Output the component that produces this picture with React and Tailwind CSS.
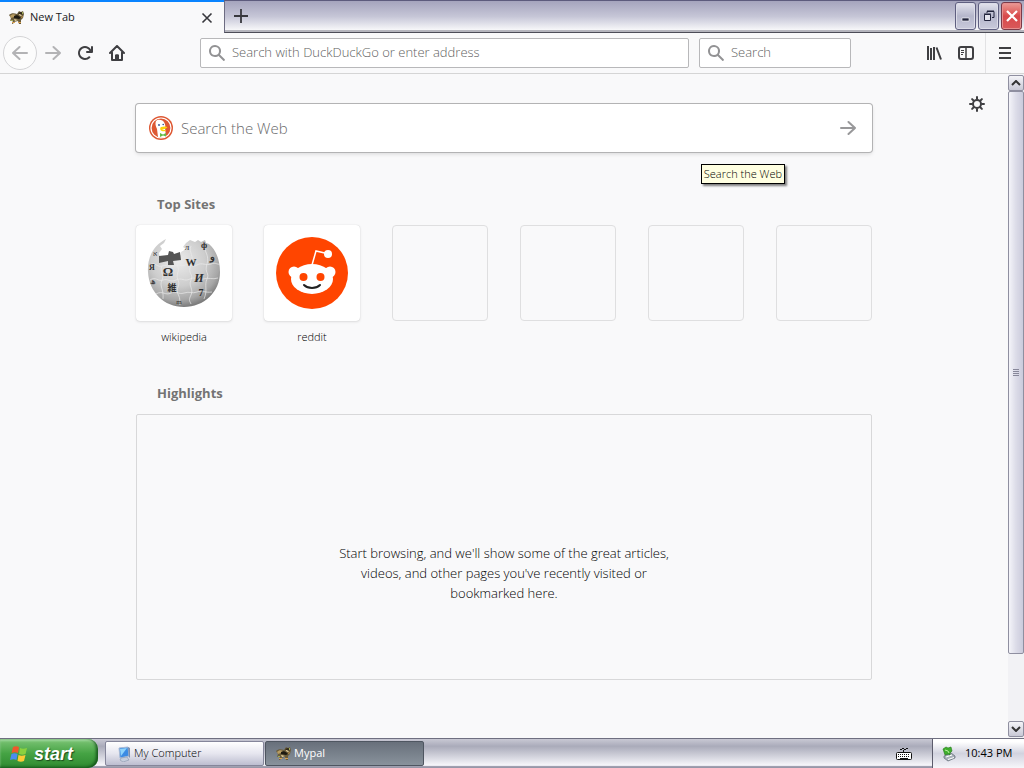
import React from "react";

const shortcuts = [
  { name: "wikipedia", href: "#wikipedia", Logo: WikipediaLogo },
  { name: "reddit", href: "#reddit", Logo: RedditLogo },
  null,
  null,
  null,
  null,
];

/* ---------- icons ---------- */

function Icon({ d, className = "size-4" }) {
  return (
    <svg viewBox="0 0 16 16" className={className} fill="currentColor" aria-hidden="true">
      <path d={d} />
    </svg>
  );
}

const paths = {
  search:
    "M15.7 14.3l-4.8-4.8a6 6 0 1 0-1.4 1.4l4.8 4.8a1 1 0 0 0 1.4-1.4zM6 10a4 4 0 1 1 4-4 4 4 0 0 1-4 4z",
  reload:
    "M15 1a1 1 0 0 0-1 1v2.4A7 7 0 1 0 8 15a7 7 0 0 0 5-2 1 1 0 0 0-1.5-1.5A5 5 0 1 1 12.5 6H10a1 1 0 0 0 0 2h5a1 1 0 0 0 1-1V2a1 1 0 0 0-1-1z",
};

function ArrowIcon({ flip, className = "size-4" }) {
  return (
    <svg viewBox="0 0 16 16" className={className} fill="none" stroke="currentColor" strokeWidth="2" strokeLinecap="round" strokeLinejoin="round" aria-hidden="true">
      <path d={flip ? "M15 8H1M7.5 2L1 8l6.5 6" : "M1 8h14M8.5 2L15 8l-6.5 6"} />
    </svg>
  );
}

function HomeIcon() {
  return (
    <svg viewBox="0 0 16 16" className="size-4" fill="none" stroke="currentColor" strokeWidth="2" strokeLinecap="round" strokeLinejoin="round" aria-hidden="true">
      <path d="M1 8l7-7 7 7M3 7.500V15h10V7.500" />
      <path d="M6.500 15.500V9.500h3v6z" fill="currentColor" stroke="none" />
      <path d="M6.500 15V10h3v5" strokeWidth="1" />
    </svg>
  );
}

function LibraryIcon() {
  return (
    <svg viewBox="0 0 16 16" className="size-4" fill="none" stroke="currentColor" strokeWidth="2" aria-hidden="true">
      <path d="M2 1v14M8 2v13M10.500 2.500L15 14.500" />
      <path d="M5 3v12" />
    </svg>
  );
}

function SidebarIcon() {
  return (
    <svg viewBox="0 0 16 16" className="size-4" fill="none" stroke="currentColor" aria-hidden="true">
      <rect x="1" y="2" width="14" height="12" rx="2" strokeWidth="2" />
      <path d="M8 2v12" strokeWidth="1.500" />
      <path d="M3 5.500h3M3 7.500h3M3 9.500h2" />
    </svg>
  );
}

function GearIcon() {
  return (
    <svg viewBox="0 0 16 16" className="size-4" fill="none" stroke="currentColor" strokeWidth="2" strokeLinecap="round" aria-hidden="true">
      <circle cx="8" cy="8" r="4" />
      <path d="M8 1v2M8 13v2M1 8h2M13 8h2M3.100 3.100l1.400 1.400M11.500 11.500l1.400 1.400M3.100 12.900l1.400-1.400M11.500 4.500l1.400-1.400" />
    </svg>
  );
}

function MypalIcon() {
  return (
    <svg viewBox="0 0 16 16" className="size-4 shrink-0" aria-hidden="true">
      <path d="M0 5c2-2 5-2 8-1l2-3 2 1 2-1 1 3-1 4-2 2v4h-2l-1-3-4 1-1 2H3l1-4-3 1 1-3z" fill="#6b5c3b" />
      <path d="M1 6c2-2 4-2 6-1L5 7 2 8z" fill="#b89c62" />
      <path d="M5 6c2-1.500 4-1 6 1l1 1-2 1-5-1z" fill="#1d1911" />
      <path d="M9 3l3-1 2 1-1 2-3-1z" fill="#31291a" />
      <path d="M10 4l3 1-1 1-2-1zM5 9l4 1-3 1z" fill="#f0dcaa" />
      <path d="M12 7l2-1-1 2zM3 12h3v1H3zM9 12h3v1H9z" fill="#d8a050" />
      <path d="M13 2h1v2h-1zM2 10h2v1H2z" fill="#9dab55" />
    </svg>
  );
}

function DuckIcon() {
  return (
    <svg viewBox="0 0 24 24" className="size-6 shrink-0" aria-hidden="true">
      <circle cx="12" cy="12" r="12" fill="#de5833" />
      <circle cx="12" cy="12" r="10" fill="none" stroke="#fff" strokeWidth="1.200" />
      <path d="M7 5c2-2 7-1.500 8.500 2 1 2 1 3.500.5 5l1 8.500c-2.500 1.500-5 1.500-8 .6L8 13C6.500 10 6 7 7 5z" fill="#fff" />
      <path d="M12 11c2-.8 5-.8 6.500 0-.5 1.700-3.500 2.200-5.500 2.300 1 1 3 .6 4 1-1.100 1.600-4.600 1.100-5.500-.4-.5-1-.3-2.300.5-2.900z" fill="#fdd20a" />
      <path d="M11 17l3 1.500 3-1.500v3.500l-3-1-3 1.500z" fill="#65bc46" />
      <circle cx="10" cy="9" r="0.900" fill="#2d4f8e" />
      <circle cx="14.200" cy="8.500" r="0.800" fill="#2d4f8e" />
    </svg>
  );
}

function WikipediaLogo() {
  return (
    <svg viewBox="0 0 74 70" className="h-[70px] w-[74px]" aria-hidden="true">
      <defs>
        <radialGradient id="globe" cx="42%" cy="32%" r="68%">
          <stop offset="0" stopColor="#ebebeb" />
          <stop offset="0.550" stopColor="#cdcdcd" />
          <stop offset="0.850" stopColor="#a6a6a6" />
          <stop offset="1" stopColor="#7d7d7d" />
        </radialGradient>
      </defs>
      <path
        d="M19 1C7 7 0 19 1 34c1 20 16 35 36 35s36-15 36-35c0-12-4-22-11-28l-3-1-1-3-4 2-3-2-3 2-5-2-4 3-3 4 3 2-5 3v3l-8 3H13l-1-5 3-4-2-3 4-3z"
        fill="url(#globe)"
      />
      <path d="M12 18l9-1 1-4 4 1 1 2 6-2 1 8-8 1 1 4h-6v-4l-9 2z" fill="#555" />
      <g fill="none" stroke="#e9e9e9" strokeWidth="0.700">
        <path d="M3 27c5-4 7 3 12 1s6 2 12 0 6 1 11-1 7 3 12 0 9 1 14-1 6 1 9 0" />
        <path d="M3 42c6-4 8 2 13 0s7 3 13 0 8 2 14-1 7 2 13 0 9 1 15-1" />
        <path d="M9 56c7-4 9 2 15-1s7 2 13 0 8 1 13-1 8 1 15 0" />
        <path d="M15 28c-3 6 3 8 0 14s2 9 1 19M30 27c4 6-2 9 1 15s-3 8 0 14 1 7 2 11M44 8c-3 6 4 10 0 19s3 9 0 15 3 9 0 15-1 6 0 9M58 6c-2 7 5 11 2 20s3 9 0 15 1 11-3 20" />
      </g>
      <g fill="#303030" fontFamily="Liberation Serif, serif" textAnchor="middle">
        <text x="21" y="38" fontSize="13" fontWeight="bold">Ω</text>
        <text x="44" y="28" fontSize="11" fontWeight="bold">W</text>
        <text x="52" y="44" fontSize="12" fontWeight="bold" fontStyle="italic">И</text>
        <text x="25" y="53" fontSize="9" fontWeight="bold" fontFamily="Noto Sans CJK JP, sans-serif">維</text>
        <text x="57" y="10" fontSize="9" fontWeight="bold">ф</text>
        <text x="65" y="22" fontSize="10" fontWeight="bold">و</text>
        <text x="54" y="58" fontSize="10" fontWeight="bold">7</text>
        <text x="5" y="32" fontSize="8" fontWeight="bold">Я</text>
        <text x="6" y="46" fontSize="8">ھ</text>
        <text x="8" y="18" fontSize="7">א</text>
        <text x="40" y="12" fontSize="9">л</text>
        <text x="32" y="66" fontSize="7">m</text>
      </g>
    </svg>
  );
}

function RedditLogo() {
  return (
    <svg viewBox="0 0 72 72" className="size-[72px]" aria-hidden="true">
      <circle cx="36" cy="36" r="36" fill="#ff4500" />
      <path d="M36 28l4-14 13 3" fill="none" stroke="#fff" strokeWidth="1.500" />
      <circle cx="52" cy="17" r="4" fill="#fff" />
      <circle cx="18" cy="35" r="5.500" fill="#fff" />
      <circle cx="54" cy="35" r="5.500" fill="#fff" />
      <ellipse cx="36" cy="42" rx="21" ry="15" fill="#fff" />
      <circle cx="27.500" cy="40" r="4" fill="#ff4500" />
      <circle cx="44.500" cy="40" r="4" fill="#ff4500" />
      <path d="M28 48c4 4 12 4 16 0" fill="none" stroke="#222" strokeWidth="2" strokeLinecap="round" />
    </svg>
  );
}

function WindowsFlag() {
  return (
    <svg viewBox="0 0 18 18" className="size-[18px] shrink-0" aria-hidden="true">
      <path d="M3 2c2-1 4-1 6 0L8 8c-2-1-4-1-6.500 0z" fill="#f0582c" />
      <path d="M10 3c2 1 4 1 7 0l-1.500 6c-2 1-4 1-6.500 0z" fill="#8bd13f" />
      <path d="M1.500 9c2-1 4-1 6 0l-1 6c-2-1-4-1-6.500 0z" fill="#4c8cf0" />
      <path d="M8.500 10c2 1 4 1 7 0L14 16c-2 1-4 1-6.500 0z" fill="#fccb35" />
    </svg>
  );
}

function ComputerIcon() {
  return (
    <svg viewBox="0 0 16 16" className="size-4 shrink-0" aria-hidden="true">
      <path d="M3 2l9-1 1 9-9 2z" fill="#3b8be4" stroke="#a9bbd6" />
      <path d="M4 3l7-1-6 8z" fill="#8fd3fb" />
      <path d="M12 1l2 1v9l-1 1z" fill="#7b8fb0" />
      <path d="M5 12l6-1 2 3-6 2-3-2z" fill="#c6cedd" stroke="#7d8aa3" strokeWidth="0.500" />
    </svg>
  );
}

function KeyboardIcon() {
  return (
    <svg viewBox="0 0 16 14" className="h-3.5 w-4" fill="none" stroke="#111" aria-hidden="true">
      <path d="M4 2.500h2M6 1.500h2M8 2.500h2M10 1.500h2" />
      <path d="M7.500 3v2" />
      <rect x="0.500" y="5.500" width="15" height="7" rx="1" fill="#fff" />
      <path d="M2 7.500h12M2 9.500h12" strokeDasharray="1 1" />
      <path d="M4 11.500h8" />
    </svg>
  );
}

function TrayIcon() {
  return (
    <svg viewBox="0 0 16 16" className="size-4" aria-hidden="true">
      <path d="M3 10l7-3 4 3v2l-7 3-4-3z" fill="#a9b1ba" stroke="#5b6570" strokeWidth="0.700" />
      <path d="M5 11l6-2M7 13.500l6-2" stroke="#fff" />
      <path d="M2 3l3-2 2 1 3-1 1 4-2 2v2L7 8 4 9z" fill="#3fae2d" stroke="#227818" strokeWidth="0.600" />
      <path d="M4 4l3 1 1 2" stroke="#b6ee9a" fill="none" />
    </svg>
  );
}

/* ---------- browser chrome ---------- */

const captionButton =
  "flex h-7 w-[21px] items-center justify-center rounded-[3px] border border-[#5f5f80] bg-linear-to-b from-[#e4e4ee] via-[#b5b6cb] to-[#c9cadb] text-[#22243c] shadow-[inset_0_0_0_1px_#dcdce8]";

function TabStrip() {
  return (
    <header className="flex h-[33px] shrink-0 bg-[#f9f9fa]">
      <div className="flex w-56 shrink-0 items-center border-t-2 border-[#0a84ff] pr-[11px] pl-[9px] text-[11px]">
        <MypalIcon />
        <span className="ml-[5px] flex-1">New Tab</span>
        <button aria-label="Close tab" className="flex size-3 items-center justify-center text-[#38383d]">
          <svg viewBox="0 0 12 12" className="size-3" stroke="currentColor" strokeWidth="1.600">
            <path d="M1.500 1.500l9 9M10.500 1.500l-9 9" />
          </svg>
        </button>
      </div>
      <div className="flex flex-1 items-start justify-between border-t border-b border-l border-t-[#5d5b7d] border-b-[#4d4d58] border-l-[#6d6c82] bg-linear-to-b from-[#a5a4bd] via-[#c6c6d7] to-[#ffffff] pr-0.5 shadow-[inset_0_-2px_0_#b5b5bd]">
        <button aria-label="New tab" className="flex h-[29px] w-8 items-center justify-center text-[#38383d]">
          <svg viewBox="0 0 14 14" className="size-3.5" stroke="currentColor" strokeWidth="1.800">
            <path d="M7 0v14M0 7h14" />
          </svg>
        </button>
        <div className="flex gap-0.5 pt-px">
          <button aria-label="Minimize" className={captionButton}>
            <svg viewBox="0 0 12 12" className="size-3"><path d="M2 8h7v3H2z" fill="#22243c" stroke="#fff" strokeWidth="0.600" /></svg>
          </button>
          <button aria-label="Restore" className={captionButton}>
            <svg viewBox="0 0 12 12" className="size-3" fill="none" stroke="currentColor">
              <path d="M4 3V1.500h7v6H9M4 1h7" />
              <path d="M1.500 4.500h6v6h-6zM1 4h7" fill="#e4e4ee" />
            </svg>
          </button>
          <button
            aria-label="Close"
            className="flex h-7 w-[21px] items-center justify-center rounded-[3px] border border-[#7b3a48] bg-linear-to-b from-[#eb9a96] via-[#d8484b] to-[#d9595a] text-white shadow-[inset_0_0_0_1px_#e58f8f]"
          >
            <svg viewBox="0 0 12 12" className="size-3" stroke="currentColor" strokeWidth="2.200">
              <path d="M1 1l10 10M11 1L1 11" />
            </svg>
          </button>
        </div>
      </div>
    </header>
  );
}

const toolButton = "flex size-8 shrink-0 items-center justify-center text-[#3f3f42]";

const toolField = "flex h-[30px] items-center rounded-xs border border-[#b8b8ba] bg-white pl-2 text-[#929294]";

function ToolBar() {
  return (
    <nav className="flex h-[41px] shrink-0 items-center border-b border-[#d5d5d5] bg-[#f9f9fa] pl-[3px]">
      <button aria-label="Back" className="flex size-[34px] shrink-0 items-center justify-center rounded-full border border-[#d4d4d6] bg-[#fcfcfc] text-[#b3b3b5]">
        <ArrowIcon flip />
      </button>
      <button aria-label="Forward" className="flex size-8 shrink-0 items-center justify-center text-[#b3b3b5]">
        <ArrowIcon />
      </button>
      <button aria-label="Reload" className={toolButton}>
        <Icon d={paths.reload} />
      </button>
      <button aria-label="Home" className={toolButton}>
        <HomeIcon />
      </button>

      <label className={`${toolField} ml-[67px] min-w-0 flex-1`}>
        <Icon d={paths.search} />
        <input aria-label="Address" placeholder="Search with DuckDuckGo or enter address" className="ml-[7px] min-w-0 flex-1 text-[13px] font-light outline-none placeholder:text-[#5f5f61]" />
      </label>
      <label className={`${toolField} ml-2.5 w-[152px]`}>
        <Icon d={paths.search} />
        <input aria-label="Search bar" placeholder="Search" className="ml-[7px] min-w-0 flex-1 text-[13px] font-light outline-none placeholder:text-[#5f5f61]" />
      </label>

      <button aria-label="Library" className="ml-[67px] flex size-8 shrink-0 items-center justify-center text-[#3f3f42]">
        <LibraryIcon />
      </button>
      <button aria-label="Sidebars" className={toolButton}>
        <SidebarIcon />
      </button>
      <div className="ml-[3px] flex h-full items-center border-l border-[#e2e2e4]">
        <button aria-label="Menu" className="flex h-8 w-[38px] items-center justify-center text-[#3f3f42]">
          <svg viewBox="0 0 12 12" className="size-3" stroke="currentColor" strokeWidth="2">
            <path d="M0 1h12M0 6h12M0 11h12" />
          </svg>
        </button>
      </div>
    </nav>
  );
}

/* ---------- new tab page ---------- */

function SearchBox() {
  return (
    <form className="relative" onSubmit={(e) => e.preventDefault()}>
      <div className="flex h-12 items-center rounded-[3px] bg-white pl-[13px] shadow-[0_0_0_1px_#b3b3b4,0_2px_4px_#00000022]">
        <DuckIcon />
        <input aria-label="Search the Web" placeholder="Search the Web" className="ml-2 min-w-0 flex-1 text-[15px] font-light outline-none placeholder:text-[#6a6a6c]" />
        <button aria-label="Go" className="flex size-12 items-center justify-center text-[#98989a]">
          <ArrowIcon />
        </button>
      </div>
      <div role="tooltip" className="absolute top-[60px] right-[87px] border border-black bg-[#ffffe1] px-0.5 text-[11px] leading-[18px] font-light whitespace-nowrap text-black shadow-[2px_2px_2px_#00000080]">
        Search the Web
      </div>
    </form>
  );
}

function NewTabPage() {
  return (
    <main className="relative min-w-0 flex-1 overflow-hidden bg-[#f9f9fa]">
      <button aria-label="Customize" className="absolute top-[22px] right-[23px] text-[#3f3f42]">
        <GearIcon />
      </button>
      <div className="mx-auto w-full max-w-[736px] pt-[30px]">
        <SearchBox />

        <section className="mt-[42px]">
          <h2 className="pl-[21px] text-[13px] leading-5 font-bold text-[#737373]">Top Sites</h2>
          <ul className="mt-[11px] grid grid-cols-6 gap-8">
            {shortcuts.map((site, i) => (
              <li key={i}>
                {site ? (
                  <a href={site.href} className="block text-center text-[11px] leading-4 font-light text-black">
                    <span className="flex h-24 items-center justify-center rounded-sm bg-white shadow-[0_0_1px_#00000030,0_1px_3px_#0000001c]">
                      <site.Logo />
                    </span>
                    <span className="mt-2 block">{site.name}</span>
                  </a>
                ) : (
                  <div className="h-24 rounded-sm border border-[#dfdfe0]" />
                )}
              </li>
            ))}
          </ul>
        </section>

        <section className="mt-[38px]">
          <h2 className="pl-[21px] text-[13px] leading-5 font-bold text-[#737373]">Highlights</h2>
          <div className="mt-[11px] min-h-[266px] rounded-xs border border-[#d8d8d9] pt-32">
            <p className="mx-auto w-[346px] text-center text-[13px] leading-5 font-light text-black">
              Start browsing, and we'll show some of the great articles, videos, and other pages you've recently visited or bookmarked here.
            </p>
          </div>
        </section>
      </div>
    </main>
  );
}

const scrollButton =
  "flex size-4 shrink-0 items-center justify-center rounded-xs border border-[#8f8fa0] bg-linear-to-b from-[#f4f4f8] to-[#c9c9d6]";

function ScrollBar() {
  return (
    <aside className="flex w-4 shrink-0 flex-col bg-[#f2f2f5] py-px">
      <button aria-label="Scroll up" className={scrollButton}>
        <svg viewBox="0 0 10 6" className="h-1.5 w-2.5" fill="none" stroke="#333" strokeWidth="2"><path d="M1 5l4-4 4 4" /></svg>
      </button>
      <div className="flex flex-1 flex-col">
        <div className="flex grow-[563] basis-0 items-center justify-center rounded-xs border border-[#8f8fa0] bg-linear-to-r from-[#f4f4f9] via-[#dcdce8] to-[#cbcbdc]">
          <svg viewBox="0 0 6 8" className="h-2 w-1.5" stroke="#88889a"><path d="M0 .5h6M0 2.500h6M0 4.500h6M0 6.500h6" /></svg>
        </div>
        <div className="grow-[67] basis-0" />
      </div>
      <button aria-label="Scroll down" className={scrollButton}>
        <svg viewBox="0 0 10 6" className="h-1.5 w-2.5" fill="none" stroke="#333" strokeWidth="2"><path d="M1 1l4 4 4-4" /></svg>
      </button>
    </aside>
  );
}

/* ---------- desktop ---------- */

function TaskBar() {
  return (
    <footer className="flex h-[30px] shrink-0 border-t border-[#6f6f80] bg-linear-to-b from-[#c9c9d4] from-0% via-[#aaabba] via-25% to-[#f6f6fa] to-90% text-[11px] shadow-[inset_0_-2px_1px_#9797a8]">
      <button className="flex h-full w-[98px] shrink-0 items-center rounded-r-[10px] bg-linear-to-b from-[#7cc576] via-[#45a344] to-[#2f8a30] pl-2.5 text-white shadow-[inset_-2px_-1px_3px_#14561a,inset_0_2px_2px_#a5dba0]">
        <WindowsFlag />
        <span className="ml-1.5 font-['Liberation_Sans',sans-serif] text-lg leading-5 font-bold italic text-shadow-[1px_1px_1px_#1c4a1c]">start</span>
      </button>
      <div className="ml-[7px] flex min-w-0 flex-1 gap-px pt-0.5 pb-0.5">
        <button className="flex w-[159px] items-center rounded-xs border border-[#85869a] bg-linear-to-b from-[#ffffff] via-[#e6e6ef] to-[#bdbed0] pl-2.5 font-light text-black">
          <ComputerIcon />
          <span className="ml-0.5">My Computer</span>
        </button>
        <button className="flex w-[159px] items-center rounded-xs border border-[#4f5661] bg-linear-to-b from-[#68707b] to-[#89929c] pl-2.5 text-white">
          <MypalIcon />
          <span className="ml-0.5">Mypal</span>
        </button>
      </div>
      <button aria-label="Keyboard layout" className="mr-5 flex w-4 items-center">
        <KeyboardIcon />
      </button>
      <div className="flex w-[92px] shrink-0 items-center border-l border-[#5c5c6c] bg-linear-to-b from-[#ffffff] from-10% via-[#d2d3df] via-50% to-[#f6f6fa] pl-2 text-black">
        <TrayIcon />
        <time className="ml-2 whitespace-nowrap">10:43 PM</time>
      </div>
    </footer>
  );
}

export default function App() {
  return (
    <div className="flex h-screen flex-col overflow-hidden bg-[#f9f9fa] font-['Open_Sans','Noto_Sans',sans-serif] text-[#1a1a1c]">
      <TabStrip />
      <ToolBar />
      <div className="flex min-h-0 flex-1">
        <NewTabPage />
        <ScrollBar />
      </div>
      <TaskBar />
    </div>
  );
}
